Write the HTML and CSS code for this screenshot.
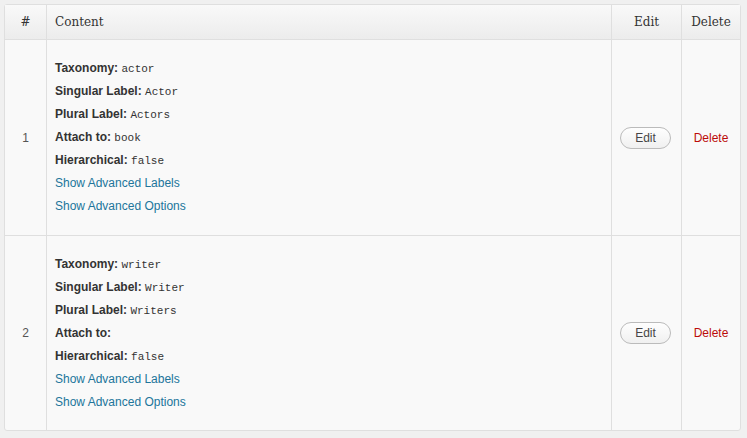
FILE: index.html
```html
<!DOCTYPE html>
<html>
<head>
<meta charset="utf-8">
<link rel="stylesheet" href="styles.css">
</head>
<body>
<table class="widefat">
  <colgroup>
    <col class="c-num"><col class="c-content"><col class="c-edit"><col class="c-del">
  </colgroup>
  <thead>
    <tr><th class="num">#</th><th class="content">Content</th><th class="center">Edit</th><th class="center last">Delete</th></tr>
  </thead>
  <tbody>
    <tr class="r1">
      <td class="num">1</td>
      <td class="content">
        <div class="line"><b>Taxonomy:</b> <code>actor</code></div>
        <div class="line"><b>Singular Label:</b> <code>Actor</code></div>
        <div class="line"><b>Plural Label:</b> <code>Actors</code></div>
        <div class="line"><b>Attach to:</b> <code>book</code></div>
        <div class="line"><b>Hierarchical:</b> <code>false</code></div>
        <div class="line"><a href="#">Show Advanced Labels</a></div>
        <div class="line"><a href="#">Show Advanced Options</a></div>
      </td>
      <td class="center"><span class="button">Edit</span></td>
      <td class="center last"><a class="delete" href="#">Delete</a></td>
    </tr>
    <tr class="r2">
      <td class="num">2</td>
      <td class="content">
        <div class="line"><b>Taxonomy:</b> <code>writer</code></div>
        <div class="line"><b>Singular Label:</b> <code>Writer</code></div>
        <div class="line"><b>Plural Label:</b> <code>Writers</code></div>
        <div class="line"><b>Attach to:</b> </div>
        <div class="line"><b>Hierarchical:</b> <code>false</code></div>
        <div class="line"><a href="#">Show Advanced Labels</a></div>
        <div class="line"><a href="#">Show Advanced Options</a></div>
      </td>
      <td class="center"><span class="button">Edit</span></td>
      <td class="center last"><a class="delete" href="#">Delete</a></td>
    </tr>
  </tbody>
</table>
</body>
</html>
```
FILE: styles.css
```css
html, body {
  margin: 0;
  background: #f0f0f0;
}
body {
  padding: 4px 0 0 4px;
  font-family: "Liberation Sans", Arial, sans-serif;
  font-size: 12px;
  color: #333;
}
.widefat {
  width: 737px;
  table-layout: fixed;
  border-collapse: separate;
  border-spacing: 0;
  border: 1px solid #dfdfdf;
  border-radius: 3px;
  background: #f9f9f9;
}
.c-num { width: 42px; }
.c-content { width: 565px; }
.c-edit { width: 70px; }
.c-del { width: 58px; }
th, td {
  border-right: 1px solid #dfdfdf;
  padding: 0;
}
th.last, td.last { border-right: 0; }
thead th {
  height: 34px;
  border-bottom: 1px solid #dfdfdf;
  background: linear-gradient(to bottom, #f9f9f9, #ececec);
  font-family: "DejaVu Serif", Georgia, serif;
  font-weight: normal;
  font-size: 12px;
  color: #333;
  text-align: center;
  vertical-align: middle;
}
thead th.content {
  text-align: left;
  padding-left: 8px;
}
tbody td {
  vertical-align: middle;
  text-align: center;
}
tbody tr.r1 td { border-bottom: 1px solid #dfdfdf; }
td.num { color: #555; }
td.content {
  text-align: left;
  padding: 17px 8px 17px 8px;
}
tr.r2 td.content { padding-bottom: 16px; }
.line {
  line-height: 23px;
  height: 23px;
  white-space: nowrap;
}
.line b { color: #333; }
code {
  font-family: "Liberation Mono", "Courier New", monospace;
  font-size: 11px;
  color: #333;
}
a {
  color: #21759b;
  text-decoration: none;
}
.button {
  display: inline-block;
  box-sizing: border-box;
  width: 51px;
  height: 22px;
  line-height: 20px;
  margin-right: 2px;
  border: 1px solid #bbb;
  border-radius: 11px;
  background: linear-gradient(to bottom, #fefefe, #f0f0f0);
  color: #464646;
  font-size: 12px;
  text-align: center;
}
a.delete { color: #bc0b0b; }
```
